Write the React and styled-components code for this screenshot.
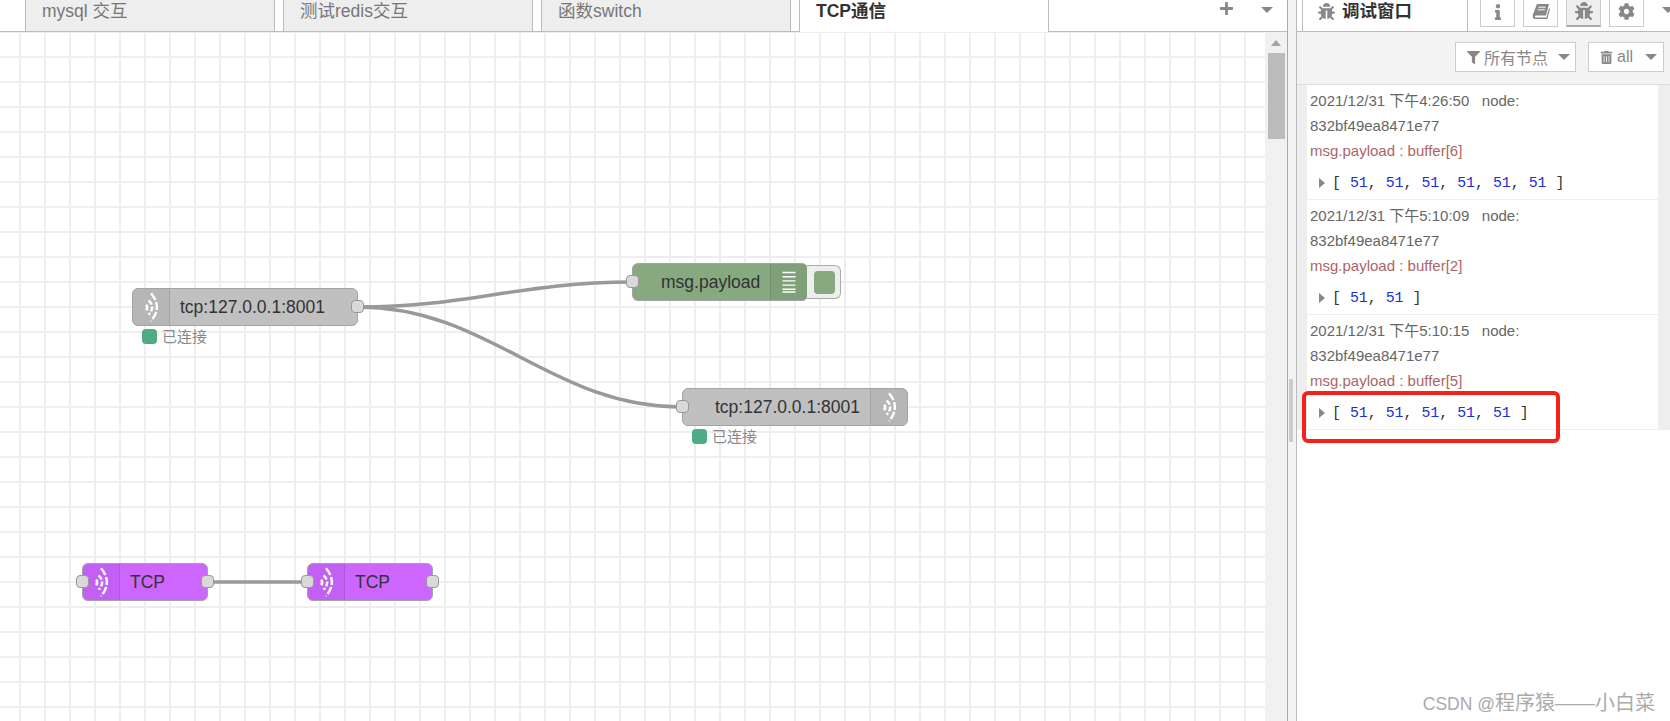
import React from "react";
import styled, { createGlobalStyle } from "styled-components";
import { FaBug, FaCog, FaFilter, FaInfo, FaPlus, FaTrashAlt } from "react-icons/fa";

const GlobalStyle = createGlobalStyle`
  html, body {
    margin: 0;
    padding: 0;
    height: 100%;
    overflow: hidden;
    background: #fff;
  }
  * { box-sizing: border-box; }
  body {
    font-family: "Liberation Sans", "Noto Sans CJK SC", sans-serif;
  }
`;

const flowTabs = ["mysql 交互", "测试redis交互", "函数switch", "TCP通信"];

const messages = [
  { time: "2021/12/31 下午4:26:50", label: "msg.payload : buffer[6]", values: [51, 51, 51, 51, 51, 51] },
  { time: "2021/12/31 下午5:10:09", label: "msg.payload : buffer[2]", values: [51, 51] },
  { time: "2021/12/31 下午5:10:15", label: "msg.payload : buffer[5]", values: [51, 51, 51, 51, 51] },
];

const WaveIcon = () => (
  <svg width="38" height="38" viewBox="0 0 38 38" fill="none" stroke="#fff" strokeWidth="2.6">
    <path d="M19 4.5 Q31.5 19 19 34" strokeDasharray="8.5 2.2" />
    <path d="M16.5 12 Q24 19.5 16.5 27" strokeDasharray="5.5 2" />
    <path d="M14 16.5 Q16 19.5 14 22.5" />
  </svg>
);

const ListIcon = () => (
  <svg width="14" height="22" viewBox="0 0 14 22" stroke="#fff" strokeWidth="1.4">
    <path d="M0.5 1.5H13.5M0.5 5.7H13.5M0.5 9.9H13.5M0.5 14.1H13.5M0.5 18.3H13.5M0.5 21H13.5" />
  </svg>
);

const BookIcon = () => (
  <svg width="18" height="17" viewBox="0 0 18 17" fill="currentColor">
    <path d="M5 1 H17 L14 12.5 H4 C2.6 12.5 2.4 14.5 4 14.5 H14.5 L17 5 L18 6 L15.4 16 H3.4 C1 16 0.2 14 0.9 11.5 Z" />
    <path d="M6.4 4.2H13.6M5.7 6.8H12.9" stroke="#fff" strokeWidth="1" fill="none" />
  </svg>
);

const FlowNode = ({ x, y, w, color, label, textLeft, iconRight, inPort, outPort, status, icon, children }) => (
  <NodeBox $x={x} $y={y} $w={w} $color={color}>
    {inPort && <Port $side="left" />}
    {!iconRight && <IconCell>{icon}</IconCell>}
    <NodeLabel $left={textLeft}>{label}</NodeLabel>
    {iconRight && <IconCell $right>{icon}</IconCell>}
    {outPort && <Port $side="right" />}
    {status && (
      <NodeStatus>
        <StatusDot />
        {status}
      </NodeStatus>
    )}
    {children}
  </NodeBox>
);

const App = () => {
  return (
    <Page>
      <GlobalStyle />
      <Workspace>
        <TabBar>
          {flowTabs.map((t, i) => (
            <FlowTab key={t} $active={i === 3}>{t}</FlowTab>
          ))}
          <TabActions>
            <PlusBtn><FaPlus size={15} /></PlusBtn>
            <Caret $mt={7} />
          </TabActions>
        </TabBar>
        <WorkspaceBody>
          <Canvas>
            <Wires width="1265" height="689" fill="none" stroke="#999" strokeWidth="3.5">
              <path d="M358 275 C 470 275, 520 250, 632 250" />
              <path d="M358 275 C 490 275, 550 375, 682 375" />
              <path d="M208 550 L 307 550" />
            </Wires>
            <FlowNode
              x={132} y={256} w={226} color="#c0c0c0" label="tcp:127.0.0.1:8001"
              textLeft={10} outPort status="已连接" icon={<WaveIcon />}
            />
            <FlowNode
              x={632} y={231} w={176} color="#87a980" label="msg.payload"
              textLeft={28} iconRight inPort icon={<ListIcon />}
            >
              <OutputToggle><OutputSquare /></OutputToggle>
            </FlowNode>
            <FlowNode
              x={682} y={356} w={226} color="#c0c0c0" label="tcp:127.0.0.1:8001"
              textLeft={32} iconRight inPort status="已连接" icon={<WaveIcon />}
            />
            <FlowNode
              x={82} y={531} w={126} color="#cc66ff" label="TCP"
              textLeft={10} inPort outPort icon={<WaveIcon />}
            />
            <FlowNode
              x={307} y={531} w={126} color="#cc66ff" label="TCP"
              textLeft={10} inPort outPort icon={<WaveIcon />}
            />
          </Canvas>
          <ScrollTrack>
            <ScrollArrow />
            <ScrollThumb />
          </ScrollTrack>
        </WorkspaceBody>
      </Workspace>
      <Separator><Grip /></Separator>
      <Sidebar>
        <SideTabs>
          <SideTab>
            <FaBug size={17} color="#888" />
            <SideTitle>调试窗口</SideTitle>
          </SideTab>
          <SideBtn><FaInfo size={16} /></SideBtn>
          <SideBtn><BookIcon /></SideBtn>
          <SideBtn $active><FaBug size={18} /></SideBtn>
          <SideBtn><FaCog size={17} /></SideBtn>
          <Caret $mt={7} $ml={10} />
        </SideTabs>
        <Toolbar>
          <ToolBtn $w={121}>
            <FaFilter size={13} />
            <ToolText>所有节点</ToolText>
            <Caret $ml={10} />
          </ToolBtn>
          <ToolBtn $w={76}>
            <FaTrashAlt size={13} />
            <ToolText>all</ToolText>
            <Caret $ml={12} />
          </ToolBtn>
        </Toolbar>
        <MsgList>
          {messages.map((m) => (
            <MsgRow key={m.time}>
              <Msg>
                <MsgMeta>{m.time}&nbsp;&nbsp;&nbsp;node:</MsgMeta>
                <MsgMeta>832bf49ea8471e77</MsgMeta>
                <MsgLabel>{m.label}</MsgLabel>
                <MsgData>
                  <Expand />
                  <Bracket>[</Bracket>
                  {m.values.map((v, i) => (
                    <React.Fragment key={i}>
                      {"\u00a0"}<Num>{v}</Num>{i < m.values.length - 1 ? "," : ""}
                    </React.Fragment>
                  ))}
                  <Bracket>{"\u00a0"}]</Bracket>
                </MsgData>
              </Msg>
            </MsgRow>
          ))}
        </MsgList>
        <Highlight />
        <Watermark><WatermarkLatin>CSDN @</WatermarkLatin>程序猿——小白菜</Watermark>
      </Sidebar>
    </Page>
  );
};

const Page = styled.div`
  display: flex;
  width: 1670px;
  height: 721px;
  overflow: hidden;
`;
const Workspace = styled.div`
  flex: none;
  width: 1287px;
  display: flex;
  flex-direction: column;
`;
const TabBar = styled.div`
  display: flex;
  gap: 8px;
  height: 32px;
  padding-left: 25px;
  border-bottom: 1px solid #bbb;
  background: #fff;
`;
const FlowTab = styled.div`
  position: relative;
  width: 250px;
  height: ${(props) => (props.$active ? "32px" : "31px")};
  padding: 0 16px;
  border-left: 1px solid #bbb;
  border-right: 1px solid #bbb;
  background: ${(props) => (props.$active ? "#fff" : "#eee")};
  color: ${(props) => (props.$active ? "#333" : "#777")};
  font-size: 17.5px;
  font-weight: ${(props) => (props.$active ? "bold" : "normal")};
  line-height: 22px;
`;
const TabActions = styled.div`
  display: flex;
  margin-left: auto;
  padding-right: 14px;
`;
const PlusBtn = styled.div`
  display: flex;
  padding-top: 1px;
  margin-right: 27px;
  color: #888;
`;
const Caret = styled.span`
  flex: none;
  width: 0;
  height: 0;
  margin-top: ${(props) => props.$mt || 0}px;
  margin-left: ${(props) => props.$ml || 0}px;
  border-left: 6px solid transparent;
  border-right: 6px solid transparent;
  border-top: 6px solid #888;
`;
const WorkspaceBody = styled.div`
  flex: 1;
  display: flex;
  min-height: 0;
`;
const Canvas = styled.div`
  position: relative;
  flex: 1;
  background-color: #fff;
  background-image: linear-gradient(#eee 2px, transparent 2px), linear-gradient(90deg, #eee 2px, transparent 2px);
  background-size: 25px 25px;
  background-position: 0 24px, 19px 0;
`;
const Wires = styled.svg`
  position: absolute;
  left: 0;
  top: 0;
`;
const NodeBox = styled.div`
  position: absolute;
  left: ${(props) => props.$x}px;
  top: ${(props) => props.$y}px;
  width: ${(props) => props.$w}px;
  height: 38px;
  display: flex;
  align-items: center;
  border: 1px solid #a3a3a3;
  border-radius: 6px;
  background: ${(props) => props.$color};
`;
const IconCell = styled.div`
  flex: none;
  width: 37px;
  height: 36px;
  display: flex;
  align-items: center;
  justify-content: center;
  background: rgba(0, 0, 0, 0.05);
  border-${(props) => (props.$right ? "left" : "right")}: 1px solid rgba(0, 0, 0, 0.1);
  border-radius: ${(props) => (props.$right ? "0 5px 5px 0" : "5px 0 0 5px")};
`;
const NodeLabel = styled.div`
  flex: 1;
  padding-left: ${(props) => props.$left}px;
  color: #333;
  font-size: 17.5px;
  white-space: nowrap;
`;
const Port = styled.div`
  position: absolute;
  top: 11px;
  ${(props) => props.$side}: -7px;
  width: 13px;
  height: 13px;
  background: #d9d9d9;
  border: 1px solid #999;
  border-radius: 4px;
`;
const NodeStatus = styled.div`
  position: absolute;
  left: 9px;
  top: 40px;
  display: flex;
  align-items: center;
  gap: 5px;
  color: #888;
  font-size: 15px;
  line-height: 15px;
  white-space: nowrap;
`;
const StatusDot = styled.span`
  width: 15px;
  height: 15px;
  background: #4fab85;
  border-radius: 4px;
`;
const OutputToggle = styled.div`
  position: absolute;
  left: 174px;
  top: 1px;
  width: 34px;
  height: 34px;
  display: flex;
  align-items: center;
  justify-content: flex-end;
  padding-right: 5px;
  background: #eee;
  border: 1px solid #aaa;
  border-left: none;
  border-radius: 0 6px 6px 0;
`;
const OutputSquare = styled.span`
  width: 21px;
  height: 23px;
  background: #87a980;
  border-radius: 4px;
`;
const ScrollTrack = styled.div`
  flex: none;
  width: 22px;
  display: flex;
  flex-direction: column;
  align-items: center;
  padding-top: 8px;
  background: #f1f1f1;
`;
const ScrollArrow = styled.span`
  width: 0;
  height: 0;
  border-left: 5px solid transparent;
  border-right: 5px solid transparent;
  border-bottom: 6px solid #a3a3a3;
`;
const ScrollThumb = styled.div`
  width: 17px;
  height: 86px;
  margin-top: 7px;
  background: #bcbcbc;
`;
const Separator = styled.div`
  flex: none;
  width: 10px;
  display: flex;
  flex-direction: column;
  padding: 379px 0 0 1px;
  background: #f3f3f3;
  border-left: 1px solid #aaa;
  border-right: 1px solid #bbb;
`;
const Grip = styled.div`
  width: 4px;
  height: 63px;
  background: #ccc;
`;
const Sidebar = styled.div`
  position: relative;
  flex: 1;
  min-width: 0;
  display: flex;
  flex-direction: column;
  background: #fff;
`;
const SideTabs = styled.div`
  flex: none;
  display: flex;
  height: 32px;
  padding-left: 5px;
  gap: 8px;
  border-bottom: 1px solid #bbb;
  overflow: hidden;
`;
const SideTab = styled.div`
  flex: none;
  width: 166px;
  height: 32px;
  margin-right: 4px;
  display: flex;
  align-items: flex-start;
  gap: 7px;
  padding: 3px 0 0 15px;
  border-left: 1px solid #bbb;
  border-right: 1px solid #bbb;
  background: #fff;
  color: #888;
`;
const SideTitle = styled.span`
  margin-top: -3px;
  color: #333;
  font-size: 17.5px;
  font-weight: bold;
  line-height: 22px;
`;
const SideBtn = styled.div`
  flex: none;
  width: 35px;
  height: 27px;
  display: flex;
  align-items: center;
  justify-content: center;
  padding-bottom: 3px;
  border: 1px solid #ccc;
  border-top: none;
  border-bottom: ${(props) => (props.$active ? "2px solid #aaa" : "1px solid #ccc")};
  background: ${(props) => (props.$active ? "#eee" : "#fff")};
  color: #888;
`;
const Toolbar = styled.div`
  flex: none;
  display: flex;
  justify-content: flex-end;
  gap: 12px;
  height: 53px;
  padding: 10px 6px 0 0;
  background: #f3f3f3;
  border-bottom: 1px solid #ddd;
`;
const ToolBtn = styled.div`
  width: ${(props) => props.$w}px;
  height: 30px;
  display: flex;
  align-items: center;
  padding-left: 11px;
  background: #fff;
  border: 1px solid #ccc;
  color: #888;
`;
const ToolText = styled.span`
  margin-left: 4px;
  font-size: 16px;
`;
const MsgList = styled.div`
  display: flex;
  flex-direction: column;
`;
const MsgRow = styled.div`
  padding: 0 12px 0 10px;
  background: #eee;
`;
const Msg = styled.div`
  height: 115px;
  padding: 3px 0 0 3px;
  background: #fff;
  border-bottom: 1px solid #eee;
`;
const MsgMeta = styled.div`
  color: #666;
  font-size: 15px;
  line-height: 25px;
`;
const MsgLabel = styled(MsgMeta)`
  color: #a66;
`;
const MsgData = styled.div`
  display: flex;
  align-items: center;
  height: 25px;
  margin-top: 7px;
  padding-left: 9px;
  color: #333;
  font-family: "Liberation Mono", monospace;
  font-size: 14.9px;
  white-space: pre;
`;
const Expand = styled.span`
  width: 0;
  height: 0;
  margin-right: 7px;
  border-top: 5px solid transparent;
  border-bottom: 5px solid transparent;
  border-left: 6px solid #888;
`;
const Bracket = styled.span`
  color: #333;
`;
const Num = styled.span`
  color: #1a2fd6;
`;
const Highlight = styled.div`
  position: absolute;
  left: 5px;
  top: 391px;
  width: 258px;
  height: 52px;
  border: 4px solid #f5221b;
  border-radius: 6px;
`;
const Watermark = styled.div`
  position: absolute;
  right: 15px;
  top: 691px;
  color: #aaa;
  font-size: 20px;
  line-height: 24px;
  white-space: nowrap;
`;
const WatermarkLatin = styled.span`
  font-size: 17.5px;
`;

export default App;
